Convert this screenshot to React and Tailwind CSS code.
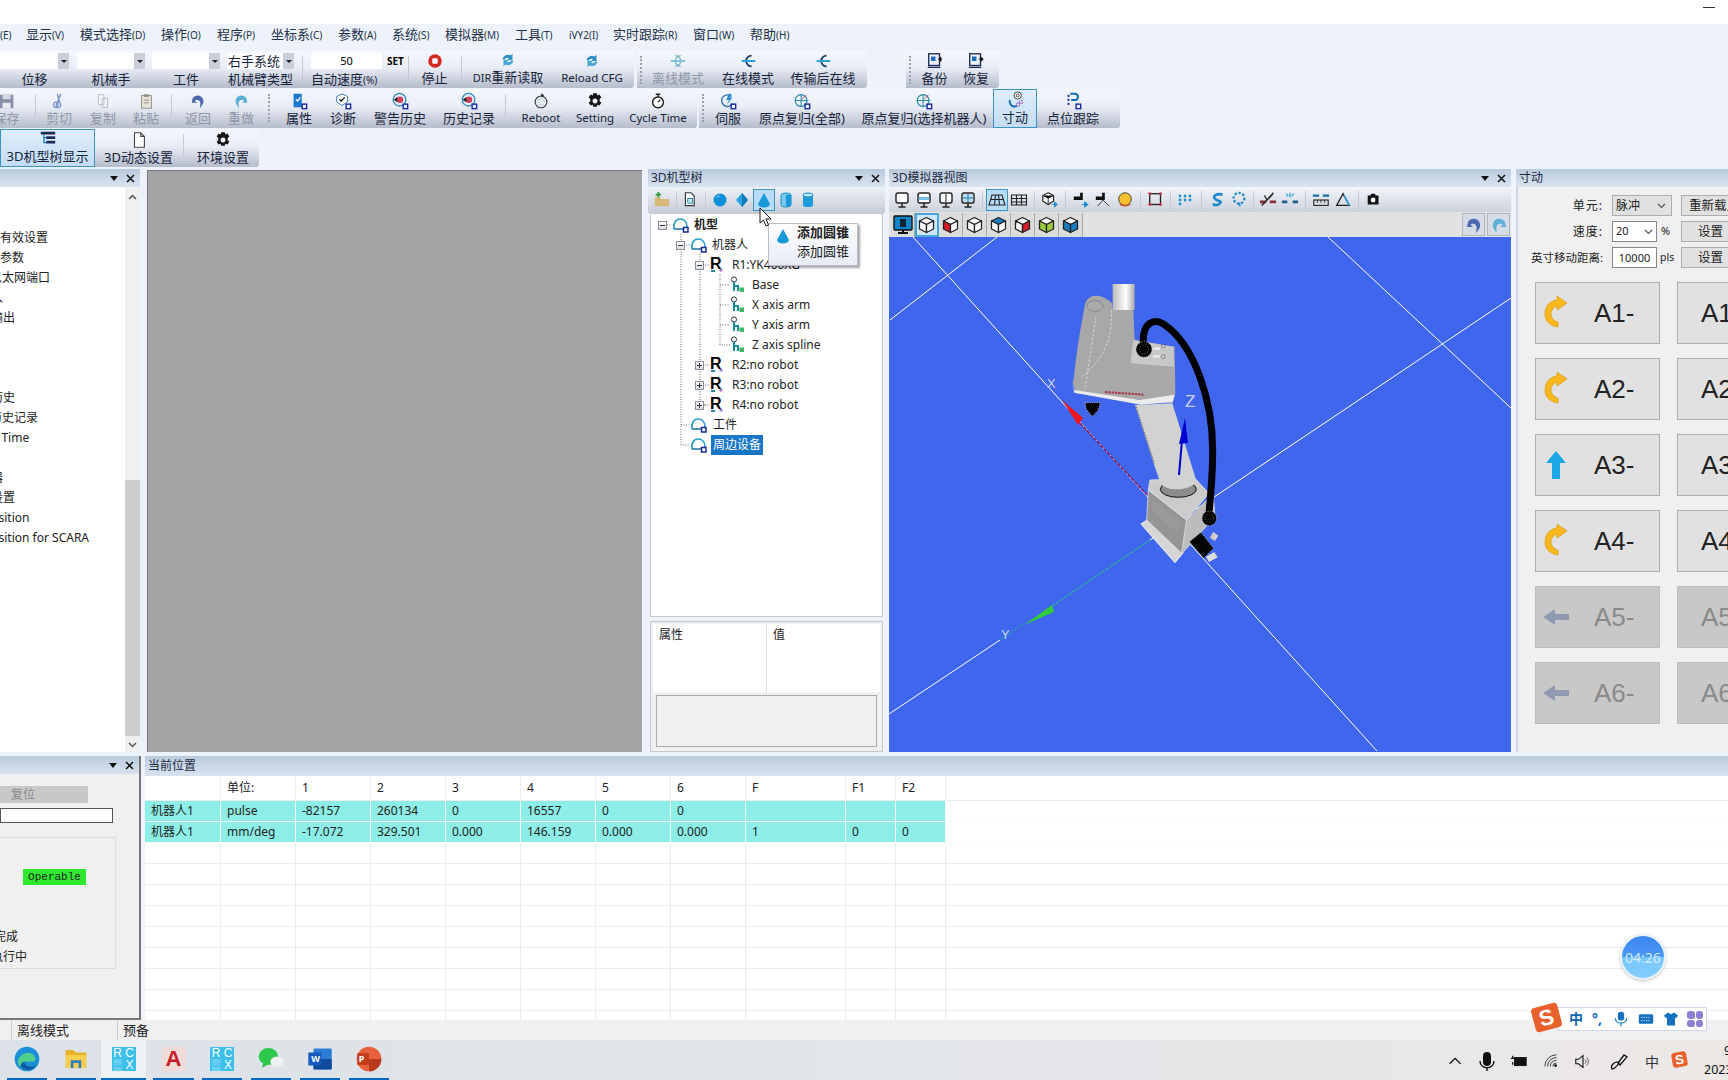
import React from "react";

const S = ({ w = 20, h = 20, v = "0 0 20 20", children, className = "" }) => (
  <svg width={w} height={h} viewBox={v} className={"shrink-0 " + className}>{children}</svg>
);

const Badge = () => <rect x="13.5" y="13.5" width="5" height="5" fill="#fff" stroke="#1a2a9c" strokeWidth="1.6" />;

const icons = {
  none: null,
  stop: <><circle cx="10" cy="10" r="7.5" fill="#d22a1e" /><rect x="7" y="7" width="6" height="6" rx="1" fill="#fff" /></>,
  sync: <><path d="M4 9c1-4 6-6 9-4l2-2v7h-6l2-2c-2-1-4 0-5 2z" fill="#2e8fc4" /><path d="M16 11c-1 4-6 6-9 4l-2 2v-7h6l-2 2c2 1 4 0 5-2z" fill="#4aa5d6" /></>,
  conn: <><path d="M14 4a6 6 0 1 0 0 12" fill="none" stroke="#1b3e66" strokeWidth="2" /><path d="M3 10h15" stroke="#2aa0dc" strokeWidth="2" /></>,
  connDim: <><path d="M13 4a6 6 0 1 0 0 12M7 4a6 6 0 1 1 0 12" fill="none" stroke="#7fb4c6" strokeWidth="1.5" /><path d="M2 10h16" stroke="#7fc0dc" strokeWidth="2" /></>,
  backup: <><rect x="3" y="2" width="12" height="13" fill="none" stroke="#1b2a55" strokeWidth="1.5" /><rect x="5.5" y="5" width="5" height="5" fill="#1c6fc0" /><path d="M2 17h14" stroke="#1b2a55" strokeWidth="1.5" /><path d="M18 8h-4M14 8l2.5-2.5v5z" stroke="#111" fill="#111" /></>,
  restore: <><rect x="3" y="2" width="12" height="13" fill="none" stroke="#1b2a55" strokeWidth="1.5" /><rect x="5.5" y="5" width="5" height="5" fill="#1c6fc0" /><path d="M2 17h14" stroke="#1b2a55" strokeWidth="1.5" /><path d="M13 8h4M18 8l-2.5-2.5v5z" stroke="#111" fill="#111" /></>,
  save: <><rect x="2" y="3" width="15" height="15" fill="#8a8fa8" /><rect x="5" y="3" width="9" height="5" fill="#d4d8e4" /><rect x="5" y="12" width="9" height="6" fill="#e8eaf2" /></>,
  cut: <path d="M12 2L8 12M8 2l3 10M8 12a2.5 3 0 1 0 .1 .1M11 12a2.5 3 0 1 0 .1 .1" fill="none" stroke="#7f98c8" strokeWidth="1.6" />,
  copy: <><path d="M5 3h6v11H5zM9 7h6v10H9z" fill="#f2f4f8" stroke="#b3b8c6" /></>,
  paste: <><rect x="5" y="4" width="11" height="14" fill="#e6e4da" stroke="#8f8c80" /><rect x="8" y="2.5" width="5" height="3" fill="#8f8c80" /><path d="M7.5 9h6M7.5 12h6" stroke="#8f8c80" /></>,
  undo: <path d="M4 7c3-5 11-4 12 2 .5 3-1 6-4 9 .8-4 1.5-8-2-9-2-.6-3 .3-3.5 1L9 12H3z" fill="#4f67ae" />,
  redo: <path d="M16 7c-3-5-11-4-12 2-.5 3 1 6 4 9-.8-4-1.5-8 2-9 2-.6 3 .3 3.5 1L11 12h6z" fill="#5fb0d4" />,
  prop: <><path d="M4 2h9v15H4z" fill="#1c78d0" /><path d="M6.5 8l2 2 3-4" fill="none" stroke="#fff" strokeWidth="1.4" /><Badge /></>,
  diag: <><path d="M9 2l6 3v6l-6 4-6-4V5z" fill="#fff" stroke="#2f6fb0" /><path d="M6 8l2 2 4-4" fill="none" stroke="#111" strokeWidth="1.4" /><Badge /></>,
  alarm: <><circle cx="9.5" cy="8.5" r="7" fill="#e9eef8" stroke="#2f8fc0" strokeWidth="1.5" /><circle cx="10" cy="8.5" r="3.6" fill="#d0405c" /><path d="M3 8.5l4-3v6z" fill="#222" /><Badge /></>,
  reboot: <><circle cx="10" cy="11" r="6.5" fill="none" stroke="#333" strokeWidth="1.2" /><circle cx="10" cy="11" r="3.5" fill="none" stroke="#5aa0c8" strokeDasharray="1 1.4" /><path d="M10 1.5l3.5 2-3 2.5z" fill="#222" /></>,
  gear: <path fillRule="evenodd" d="M8 1.5h4l.6 2.4 2.3-1 2.2 3.2-1.9 1.6 0 2.6 1.9 1.6-2.2 3.2-2.3-1-.6 2.4H8l-.6-2.4-2.3 1-2.2-3.2 1.9-1.6 0-2.6-1.9-1.6 2.2-3.2 2.3 1zM10 7.2a2.8 2.8 0 1 0 .01 0z" fill="#161616" />,
  timer: <><circle cx="10" cy="11.5" r="6" fill="#fff" stroke="#222" strokeWidth="1.6" /><path d="M7.5 2.5h5M10 2.5v3M10 11.5l2.5-3" stroke="#222" strokeWidth="1.5" /></>,
  servo: <><path d="M14 5a6.5 6.5 0 1 0 1 8" fill="none" stroke="#2f6fb0" strokeWidth="1.5" /><path d="M11 2l-3 7h3l-2 5 6-8h-3l2-4z" fill="#2a8fd0" /><Badge /></>,
  origin: <><circle cx="9" cy="9.5" r="6.5" fill="none" stroke="#2f8fa8" strokeWidth="1.4" /><path d="M2 9.5h15M9 3v13" stroke="#2f8fa8" strokeWidth="1.2" /><path d="M10 8l5-5" stroke="#d04068" /><Badge /></>,
  jog: <><path d="M4 10c0 9 9 9 10 3" fill="none" stroke="#1f6fc0" strokeWidth="2.2" /><circle cx="13" cy="5" r="4" fill="#fff" stroke="#333" /><circle cx="13" cy="5" r="1.6" fill="none" stroke="#333" /><rect x="12" y="13.5" width="3" height="3" fill="#fff" stroke="#9a6fc8" /><rect x="15" y="11" width="3" height="3" fill="#fff" stroke="#9a6fc8" /></>,
  point: <><path d="M5 3v13" stroke="#1b2a8c" strokeWidth="2" strokeDasharray="2.5 2" /><path d="M7 2h5a3.5 3.5 0 0 1 0 7H8" fill="none" stroke="#0f6fb0" strokeWidth="2.2" /><Badge /></>,
  tree: <><path d="M2 2h16v3H2z" fill="#1b2a55" /><rect x="8" y="7" width="10" height="3" fill="#1b2a55" /><rect x="8" y="12" width="10" height="3" fill="#1b2a55" /><path d="M5.5 5v9h3M5.5 8.5h3" fill="none" stroke="#1c78c0" strokeWidth="1.5" /></>,
  doc: <path d="M5 2h7l4 4v12H5zM12 2v4h4" fill="#fff" stroke="#444" strokeWidth="1.2" />,
};

const Item = ({ w, label, icon = "none", dim, active, tall, small }) => (
  <div className={`${w} h-full flex flex-col items-center justify-end shrink-0 pb-[2px] ${active ? "border border-[#3b93c6] bg-[linear-gradient(#dfeefb,#c4dcf2)]" : ""}`}>
    {icons[icon] ? <S w={tall ? 20 : 18} h={tall ? 20 : 18}>{icons[icon]}</S> : null}
    <span className={`whitespace-nowrap leading-[16px] ${small ? "text-[11.5px]" : "text-[13px]"} ${dim ? "text-[#8f97a8]" : "text-[#16233a]"}`}>{label}</span>
  </div>
);

const Sep = ({ mx = "mx-[3px]" }) => <div className={`w-px h-[24px] self-start mt-[5px] bg-[#c2c8d6] shrink-0 ${mx}`} />;
const Grip = ({ mx = "mx-[3px]" }) => <div className={`w-[2px] h-[28px] self-start mt-[5px] border-l-2 border-dotted border-[#9aa2b2] shrink-0 ${mx}`} />;

const tb = "h-full flex bg-[linear-gradient(#f4f7fd_0%,#e9edf6_45%,#b6bccb_100%)] rounded-br-[3px] overflow-hidden";

const Combo = ({ w, text, label, cw }) => (
  <div className={`${cw} h-full flex flex-col items-stretch shrink-0`}>
    <div className="h-[16px] mt-[2px] flex">
      <div className={`${w} bg-white text-[13px] leading-[16px] px-[1px] whitespace-nowrap text-[#16233a]`}>{text}</div>
      <div className="w-[11px] bg-[#c9cedb] flex items-center justify-center"><div className="border-x-[3px] border-x-transparent border-t-[3px] border-t-[#222]" /></div>
    </div>
    <div className="text-center text-[13px] leading-[16px] mt-[2px] text-[#16233a] whitespace-nowrap">{label}</div>
  </div>
);

const menu = [
  ["w-[26px]", "", "(E)"], ["w-[54px]", "显示", "(V)"], ["w-[81px]", "模式选择", "(D)"], ["w-[56px]", "操作", "(O)"],
  ["w-[54px]", "程序", "(P)"], ["w-[67px]", "坐标系", "(C)"], ["w-[54px]", "参数", "(A)"], ["w-[53px]", "系统", "(S)"],
  ["w-[70px]", "模拟器", "(M)"], ["w-[54px]", "工具", "(T)"], ["w-[44px]", "", "iVY2(I)"], ["w-[80px]", "实时跟踪", "(R)"],
  ["w-[57px]", "窗口", "(W)"], ["w-[60px]", "帮助", "(H)"],
];

const Toolbars = () => (
  <>
    <div className="h-[24px] bg-white relative shrink-0">
      <div className="absolute left-[1703px] top-[7px] w-[12px] h-px bg-[#333]" />
    </div>
    <div className="h-[26px] flex items-start pt-[2px] text-[13px] leading-[16px] text-[#22304a] shrink-0">
      {menu.map(([w, a, b], i) => (
        <div key={i} className={`${w} whitespace-nowrap shrink-0`}>{a}<span className="text-[10px]">{b}</span></div>
      ))}
    </div>

    <div className="h-[37px] flex mt-px shrink-0">
      <div className={`${tb} w-[634px]`}>
        <Combo cw="w-[69px] mr-[8px]" w="w-[58px]" label="位移" />
        <Combo cw="w-[68px] mr-[7px]" w="w-[57px]" label="机械手" />
        <Combo cw="w-[68px] mr-[7px]" w="w-[57px]" label="工件" />
        <Combo cw="w-[67px]" w="w-[56px]" text="右手系统" label="机械臂类型" />
        <Sep mx="mx-[8px]" />
        <div className="w-[94px] h-full flex flex-col shrink-0">
          <div className="h-[16px] mt-[2px] flex">
            <div className="w-[71px] bg-white text-center text-[11px] leading-[16px]">50</div>
            <div className="ml-[5px] text-[10px] font-bold leading-[16px]">SET</div>
          </div>
          <div className="text-[13px] leading-[16px] mt-[2px] text-[#16233a] whitespace-nowrap">自动速度<span className="text-[10px]">(%)</span></div>
        </div>
        <Sep />
        <Item w="w-[45px]" icon="stop" label="停止" />
        <Sep mx="mx-[4px]" />
        <Item w="w-[84px]" icon="sync" label={<><span className="text-[11px]">DIR</span>重新读取</>} />
        <Item w="w-[84px]" icon="sync" label="Reload CFG" small />
      </div>
      <div className={`${tb} w-[230px] ml-[3px]`}>
        <Grip />
        <Item w="w-[66px]" icon="connDim" label="离线模式" dim />
        <Item w="w-[74px]" icon="conn" label="在线模式" />
        <Item w="w-[76px]" icon="conn" label="传输后在线" />
      </div>
      <div className={`${tb} w-[93px] ml-[39px]`}>
        <Grip />
        <Item w="w-[41px]" icon="backup" label="备份" />
        <Item w="w-[42px]" icon="restore" label="恢复" />
      </div>
    </div>

    <div className="h-[39px] flex mt-px shrink-0">
      <div className={`${tb} w-[697px]`}>
        <div className="-ml-[21px] flex h-full">
          <Item w="w-[55px]" icon="save" label="保存" dim />
          <Sep mx="mx-[1px]" />
          <Item w="w-[44px]" icon="cut" label="剪切" dim />
          <Item w="w-[44px]" icon="copy" label="复制" dim />
          <Item w="w-[42px]" icon="paste" label="粘贴" dim />
          <Sep mx="mx-[4px]" />
          <Item w="w-[44px]" icon="undo" label="返回" dim />
          <Item w="w-[42px]" icon="redo" label="重做" dim />
          <Grip mx="mx-[6px]" />
          <Item w="w-[46px]" icon="prop" label="属性" />
          <Item w="w-[42px]" icon="diag" label="诊断" />
          <Item w="w-[72px]" icon="alarm" label="警告历史" />
          <Item w="w-[66px]" icon="alarm" label="历史记录" />
          <Sep mx="mx-[3px]" />
          <Item w="w-[64px]" icon="reboot" label="Reboot" small />
          <Item w="w-[44px]" icon="gear" label="Setting" small />
          <Item w="w-[82px]" icon="timer" label="Cycle Time" small />
        </div>
      </div>
      <div className={`${tb} w-[421px] ml-[2px]`}>
        <Grip />
        <Item w="w-[42px]" icon="servo" label="伺服" />
        <Item w="w-[106px]" icon="origin" label="原点复归(全部)" />
        <Item w="w-[138px]" icon="origin" label="原点复归(选择机器人)" />
        <Item w="w-[44px]" icon="jog" label="寸动" active />
        <Item w="w-[72px]" icon="point" label="点位跟踪" />
      </div>
    </div>

    <div className="h-[38px] flex mt-px shrink-0">
      <div className={`${tb} w-[259px]`}>
        <Item w="w-[95px]" icon="tree" label="3D机型树显示" active />
        <Item w="w-[87px]" icon="doc" label="3D动态设置" />
        <Sep mx="mx-[1px]" />
        <Item w="w-[76px]" icon="gear" label="环境设置" />
      </div>
    </div>
  </>
);

const Caption = ({ title, ctl = true, className = "" }) => (
  <div className={`h-[18px] shrink-0 flex items-center bg-[linear-gradient(#b9cbdf,#d9e3ef)] text-[12px] text-[#1d2b3e] pl-[3px] relative ${className}`}>
    <span className="whitespace-nowrap">{title}</span>
    {ctl && (
      <div className="ml-auto flex items-center gap-[8px] pr-[5px]">
        <div className="border-x-[4.5px] border-x-transparent border-t-[5px] border-t-[#111]" />
        <svg width="9" height="9" viewBox="0 0 9 9"><path d="M1 1l7 7M8 1l-7 7" stroke="#111" strokeWidth="1.5" /></svg>
      </div>
    )}
  </div>
);

const leftRows = [
  ["237", "有效设置", "ml-0"], ["257", "参数", "ml-0"], ["277", "以太网端口", "-ml-[10px]"], ["297", "输入", "-ml-[21px]"], ["317", "输出", "-ml-[9px]"],
  ["337", "", ""], ["357", "", ""], ["377", "", ""], ["397", "警告历史", "-ml-[33px]"], ["417", "警告历史记录", "-ml-[34px]"],
  ["437", "Cycle Time", "-ml-[31px]"], ["457", "", ""], ["477", "伺服器", "-ml-[33px]"], ["497", "设置", "-ml-[9px]"],
  ["517", "Position", "-ml-[16px]"], ["537", "Position for SCARA", "-ml-[16px]"],
];

const LeftPanel = () => (
  <div className="w-[140px] h-full flex flex-col shrink-0">
    <Caption title="" className="pr-[0px]" />
    <div className="flex-1 flex bg-white min-h-0">
      <div className="w-[125px] overflow-hidden pt-[41px] text-[12px] leading-[20px] text-[#222]">
        {leftRows.map(([k, t, m]) => <div key={k} className={`h-[20px] whitespace-nowrap ${m}`}>{t}</div>)}
      </div>
      <div className="w-[15px] bg-[#f0f0f0] flex flex-col items-center text-[#555]">
        <svg className="mt-[7px] shrink-0" width="9" height="6" viewBox="0 0 9 6"><path d="M1 5l3.5-3.5L8 5" fill="none" stroke="#555" strokeWidth="1.5" /></svg>
        <div className="w-full bg-[#cdcdcd] h-[256px] mt-[280px] shrink-0" />
        <svg className="mt-[6px] shrink-0" width="9" height="6" viewBox="0 0 9 6"><path d="M1 1l3.5 3.5L8 1" fill="none" stroke="#555" strokeWidth="1.5" /></svg>
      </div>
    </div>
  </div>
);

const TB = ({ children, boxed, className = "" }) => (
  <div className={`w-[22px] h-[22px] flex items-center justify-center shrink-0 ${boxed ? "border border-[#3f93c4] bg-[#b8dcf6]" : ""} ${className}`}>{children}</div>
);
const VSep = ({ mx = "mx-[4px]" }) => <div className={`w-px h-[18px] bg-[#c6ccd6] shrink-0 ${mx}`} />;

const TreeModel = () => (
  <S w={18} h={16} v="0 0 18 16"><path d="M2 12c-1-6 2-10 6-10s7 3 7 8" fill="none" stroke="#2a9cc8" strokeWidth="1.7" /><path d="M2 12h10" stroke="#1b6f9c" strokeWidth="1.5" /><rect x="11.5" y="10.5" width="4.5" height="4.5" fill="#fff" stroke="#1a2a9c" strokeWidth="1.5" /></S>
);
const TreeR = () => (
  <div className="relative w-[16px] h-[18px] shrink-0">
    <span className="absolute left-[1px] top-[-2px] text-[16px] font-bold leading-[20px] text-black font-['Liberation_Sans',sans-serif]">R</span>
    <svg className="absolute left-0 top-0" width="16" height="18" viewBox="0 0 16 18"><path d="M10 14l2-1.5 2 1.5-2 2z" fill="#a070c8" /><path d="M2 15h4" stroke="#2a8a9c" strokeWidth="2" /></svg>
  </div>
);
const TreeLink = () => (
  <S w={16} h={18} v="0 0 16 18"><circle cx="4" cy="3.5" r="2.6" fill="#fff" stroke="#2a3a4c" strokeWidth="1" /><path d="M4 6v9M4 10h4v5" fill="none" stroke="#178a9c" strokeWidth="2" /><rect x="9.5" y="11.5" width="4.5" height="4.5" fill="#3cb868" /></S>
);
const Exp = ({ plus }) => (
  <div className="w-[9px] h-[9px] border border-[#8a8f98] bg-[linear-gradient(#fff,#d8dce4)] relative shrink-0">
    <div className="absolute left-[1px] right-[1px] top-[3px] h-px bg-[#333]" />
    {plus && <div className="absolute top-[1px] bottom-[1px] left-[3px] w-px bg-[#333]" />}
  </div>
);

const TreeRow = ({ pl, exp, plus, icon, text, bold, sel, ml = "ml-[4px]" }) => (
  <div className={`h-[20px] flex items-center ${pl}`}>
    {exp ? <div className="w-[14px] shrink-0 flex"><Exp plus={plus} /></div> : null}
    <div className="bg-white flex">{icon}</div>
    <span className={`${ml} whitespace-nowrap ${bold ? "font-bold" : ""} ${sel ? "bg-[#1976c6] text-white px-[2px] leading-[20px]" : "text-[#222] bg-white"}`}>{text}</span>
  </div>
);

const TreePanel = () => (
  <div className="w-[237px] h-full flex flex-col shrink-0 relative">
    <Caption title="3D机型树" />
    <div className="h-[26px] shrink-0 flex items-center pl-[3px] bg-[linear-gradient(#eef2f8,#c6ccd8)]">
      <TB><S w={18} h={18}><path d="M2 7h6l1 2h9v8H2z" fill="#d8b878" /><path d="M6 1v6M3 4h6" stroke="#2f9a3a" strokeWidth="2" /></S></TB>
      <VSep mx="mx-[3px]" />
      <TB><S w={16} h={18}><path d="M3 1h7l4 4v12H3z" fill="#fff" stroke="#333" strokeWidth="1.4" /><rect x="6" y="8" width="6" height="6" fill="#bfe6f2" stroke="#1a7a9c" /></S></TB>
      <VSep mx="mx-[3px]" />
      <TB><S w={14} h={14} v="0 0 14 14"><circle cx="7" cy="7" r="6.5" fill="#108fd8" /><path d="M3 5a4 3 0 0 1 4-2" stroke="#9ad8f8" fill="none" /></S></TB>
      <TB><S w={14} h={16} v="0 0 14 16"><path d="M7 1l6 7-6 7-6-7z" fill="#26a4e0" /><path d="M7 1l6 7-6 7z" fill="#0f7cb8" /></S></TB>
      <TB boxed><S w={14} h={16} v="0 0 14 16"><path d="M7 1l6 11a6 3.5 0 0 1-12 0z" fill="#189ad8" /></S></TB>
      <TB><S w={12} h={16} v="0 0 12 16"><path d="M1 3a5 2 0 0 1 10 0v10a5 2 0 0 1-10 0z" fill="#7ac8ee" stroke="#1a8ec8" /><path d="M6 3v11h5V3z" fill="#189ad8" /></S></TB>
      <TB><S w={12} h={16} v="0 0 12 16"><path d="M1 3a5 2 0 0 1 10 0v10a5 2 0 0 1-10 0z" fill="#1a9ad8" /><ellipse cx="6" cy="3" rx="5" ry="2" fill="#bfe8fa" stroke="#1a8ec8" /></S></TB>
    </div>
    <div className="h-[404px] shrink-0 bg-white border border-[#c8c8c8] ml-[2px] mr-[2px] pt-[1px] text-[12px] relative overflow-hidden">
      <svg className="absolute left-0 top-0" width="233" height="402" strokeDasharray="1 1.5" stroke="#666" fill="none">
        <path d="M16 11H22M30 20V231H38M30 211H38M35 31H41M49 40V191H55M54 151H60M54 171H60M54 191H60M54 51H60M69 60V131H79M69 71H79M69 91H79M69 111H79" />
      </svg>
      <div className="relative">
        <TreeRow pl="pl-[7px]" exp icon={<TreeModel />} text="机型" bold />
        <TreeRow pl="pl-[25px]" exp icon={<TreeModel />} text="机器人" />
        <TreeRow pl="pl-[44px]" exp icon={<TreeR />} text="R1:YK400XG" ml="ml-[7px]" />
        {["Base", "X axis arm", "Y axis arm", "Z axis spline"].map((t) => (
          <TreeRow key={t} pl="pl-[79px]" icon={<TreeLink />} text={t} ml="ml-[6px]" />
        ))}
        {["R2:no robot", "R3:no robot", "R4:no robot"].map((t) => (
          <TreeRow key={t} pl="pl-[44px]" exp plus icon={<TreeR />} text={t} ml="ml-[7px]" />
        ))}
        <TreeRow pl="pl-[39px]" icon={<TreeModel />} text="工件" ml="ml-[5px]" />
        <TreeRow pl="pl-[39px]" icon={<TreeModel />} text="周边设备" sel ml="ml-[3px]" />
      </div>
    </div>
    <div className="flex-1 mt-[4px] mx-[2px] border border-[#c8c8c8] bg-[#f0f0f0] flex flex-col p-[2px] min-h-0">
      <div className="h-[68px] bg-white flex text-[12px] text-[#222] shrink-0">
        <div className="w-[114px] border-r border-[#ddd] pl-[6px] pt-[2px]">属性</div>
        <div className="pl-[6px] pt-[2px]">值</div>
      </div>
      <div className="flex-1 mt-[3px] mx-[3px] mb-[2px] border border-[#aaa] bg-[#f0f0f0]" />
    </div>
  </div>
);

const Mon = ({ fill }) => (
  <S w={16} h={18} v="0 0 16 18"><rect x="2" y="2" width="12" height="10" rx="2" fill="#fff" stroke="#222" strokeWidth="1.4" />{fill}<path d="M8 12v4M4.5 16h7" stroke="#222" strokeWidth="1.5" /></S>
);
const Cube = ({ a = "#fff", b = "#fff", c = "#fff", sel }) => (
  <div className={`w-[24px] h-[24px] flex items-center justify-center shrink-0 border-r border-[#a8a8a8] ${sel ? "bg-[#cfe6f6] outline outline-2 -outline-offset-2 outline-[#49a6d8]" : "bg-[#dcdcdc]"}`}>
    <S w={17} h={18} v="0 0 17 18">
      <path d="M8.5 1.5l7 3.5-7 3.5-7-3.5z" fill={a} stroke="#222" strokeWidth="1.3" strokeLinejoin="round" />
      <path d="M1.5 5l7 3.5v8l-7-3.5z" fill={b} stroke="#222" strokeWidth="1.3" strokeLinejoin="round" />
      <path d="M15.5 5l-7 3.5v8l7-3.5z" fill={c} stroke="#222" strokeWidth="1.3" strokeLinejoin="round" />
    </S>
  </div>
);

const Speck = ({ cx, cy, r }) => (
  <g>
    <circle cx={cx} cy={cy} r={r} fill="#050505" />
    <circle cx={cx} cy={cy} r={r} fill="none" stroke="#e8e8e8" strokeDasharray="3 4" strokeWidth="2" />
    <circle cx={cx} cy={cy} r={r * 0.55} fill="none" stroke="#bbb" strokeDasharray="2 6" strokeWidth="2" />
  </g>
);

const Robot = () => (
  <g transform="translate(1000 260) scale(0.3333)">
    <path d="M423 792l22-14 105 100-25 30z" fill="#d6d6d6" stroke="#f2f2f2" strokeWidth="3" />
    <path d="M445 690l115 90-15 100-105-100z" fill="#959595" stroke="#eee" strokeWidth="2" />
    <path d="M460 720l80 62-6 40-78-72z" fill="#9a9a9a" />
    <path d="M560 780l80-80 5 70-100 112z" fill="#bcbcbc" stroke="#ddd" strokeWidth="2" />
    <path d="M450 660l135-5 42 45-67 80-115-90z" fill="#cbcbcb" stroke="#eee" strokeWidth="2" />
    <ellipse cx="535" cy="688" rx="54" ry="24" fill="#8d8d8d" stroke="#111" strokeWidth="3" />
    <path d="M405 435l112-5 72 232c-10 30-92 36-108 6l-18-52z" fill="#d2d2d2" />
    <path d="M408 440l55 170" stroke="#666" strokeWidth="3" strokeDasharray="5 3" />
    <path d="M222 350c8-80 22-160 34-220 10-30 50-30 80 0l2 20h62l4 90 120 20 2 140-8 30-290-30-10-30z" fill="#a8a8a8" />
    <path d="M400 240l120 20 2 60-130-10z" fill="#c8c8c8" />
    <path d="M338 72h66v78h-66z" fill="url(#cap)" />
    <ellipse cx="285" cy="138" rx="24" ry="16" fill="#aaa" stroke="#777" strokeWidth="2" />
    <path d="M215 370l8 28 200 36 95-8 6-22-104 16-198-30z" fill="#ececec" />
    <path d="M288 170c-10 60-20 140-34 220M335 150c0 60-2 130-90 200" fill="none" stroke="#efefef" strokeWidth="2" strokeDasharray="8 5" />
    <path d="M315 396l115 8" stroke="#a83040" strokeWidth="6" strokeDasharray="7 3" />
    <rect x="460" y="262" width="20" height="8" fill="#e8e8e8" /><rect x="460" y="285" width="20" height="8" fill="#e8e8e8" />
    <circle cx="490" cy="258" r="6" fill="none" stroke="#222" /><circle cx="490" cy="290" r="6" fill="none" stroke="#222" />
    <path d="M430 245c-2-55 30-72 62-52 90 60 148 230 146 385 0 70-6 130-12 192" fill="none" stroke="#000" strokeWidth="21" strokeLinecap="round" />
    <Speck cx={432} cy={268} r={24} />
    <Speck cx={628} cy={775} r={22} />
    <path d="M640 815l15 12-10 16-15-10z" fill="#ccc" />
    <path d="M618 890l25-14 10 16-26 14z" fill="#ddd" />
    <path d="M568 845l35-28 38 48-30 30z" fill="#050505" stroke="#e8e8e8" strokeDasharray="3 4" strokeWidth="2" />
    <path d="M255 428h46l-6 22-18 20-18-22z" fill="#050505" stroke="#e8e8e8" strokeDasharray="3 4" strokeWidth="2" />
  </g>
);

const SimPanel = () => (
  <div className="w-[622px] h-full flex flex-col shrink-0">
    <Caption title="3D模拟器视图" />
    <div className="h-[25px] shrink-0 flex items-center pl-[2px] bg-[linear-gradient(#f2f5fa,#ccd2dc)]">
      <TB><Mon /></TB>
      <TB><Mon fill={<rect x="3" y="6" width="10" height="3" fill="#7cc0e8" />} /></TB>
      <TB><Mon fill={<path d="M8 3v8" stroke="#222" />} /></TB>
      <TB><Mon fill={<><rect x="3" y="3" width="10" height="8" fill="#bfe0f2" /><path d="M8 3v8M3 7h10" stroke="#1c7cc0" /></>} /></TB>
      <VSep mx="mx-[3px]" />
      <TB boxed><S w={18} h={14} v="0 0 18 14"><path d="M4 2h10l3 10H1zM7.5 2l-1 10M10.5 2l1 10M3 6.5h12" fill="none" stroke="#222" strokeWidth="1.1" /></S></TB>
      <TB><S w={18} h={14} v="0 0 18 14"><path d="M1.5 2h15v10h-15zM1.5 5.5h15M1.5 9h15M6.5 2v10M11.5 2v10" fill="none" stroke="#222" strokeWidth="1.1" /></S></TB>
      <VSep mx="mx-[4px]" />
      <TB><S w={20} h={18}><path d="M8 2l6 3v6l-6 4-6-4V5z" fill="#fff" stroke="#222" strokeWidth="1.3" /><path d="M2 5l6 3 6-3M8 8v7" stroke="#222" /><path d="M12 15h5M15 12l3 3-3 3z" stroke="#1c8ad0" fill="#1c8ad0" /></S></TB>
      <VSep mx="mx-[4px]" />
      <TB><S w={20} h={18}><path d="M2 6h7V2h3v8H2z" fill="#111" /><path d="M11 15h5M14 12l4 3-4 3z" stroke="#1c8ad0" fill="#1c8ad0" /></S></TB>
      <TB><S w={20} h={18}><path d="M2 6h7V2h3v8H2z" fill="#111" /><path d="M10 10l-6 7M10 10l7 7" stroke="#333" fill="none" /></S></TB>
      <TB><S w={20} h={18}><circle cx="10" cy="9" r="7" fill="#fbc02d" stroke="#333" /><path d="M4 15a8 4 0 0 0 12 0" stroke="#d2502a" strokeWidth="1.5" fill="none" /></S></TB>
      <VSep mx="mx-[4px]" />
      <TB><S w={18} h={18}><rect x="3" y="3" width="12" height="12" fill="none" stroke="#222" strokeWidth="1.5" /><g fill="#c8324a"><circle cx="3" cy="3" r="1.6" /><circle cx="15" cy="3" r="1.6" /><circle cx="3" cy="15" r="1.6" /><circle cx="15" cy="15" r="1.6" /></g></S></TB>
      <VSep mx="mx-[3px]" />
      <TB><S w={16} h={14} v="0 0 16 14"><g fill="#2090d0"><circle cx="3" cy="3" r="1.4" /><circle cx="8" cy="3" r="1.4" /><circle cx="13" cy="3" r="1.4" /><circle cx="3" cy="7" r="1.4" /><circle cx="8" cy="7" r="1.4" /><circle cx="13" cy="7" r="1.4" /><circle cx="3" cy="11" r="1.4" /></g></S></TB>
      <VSep mx="mx-[5px]" />
      <TB><S w={18} h={18}><path d="M15 4C9 2 3 6 7 9s8 2 5 5-7 1-8 1" fill="none" stroke="#1e8ac8" strokeWidth="3" /></S></TB>
      <TB className="-ml-[1px]"><S w={18} h={18}><circle cx="10" cy="8" r="6" fill="none" stroke="#1e8ac8" strokeWidth="2.5" strokeDasharray="2.5 2" /><path d="M10 13l1 4" stroke="#1e8ac8" strokeWidth="2" /></S></TB>
      <VSep mx="mx-[3px]" />
      <TB><S w={20} h={18}><path d="M1 12h7M12 12h7" stroke="#8a2a3a" strokeWidth="3" /><path d="M3 16L15 4M6 5l3 5 7-8" fill="none" stroke="#222" strokeWidth="1.5" /></S></TB>
      <TB><S w={20} h={18}><path d="M1 12h6M13 12h6" stroke="#1b5f8a" strokeWidth="3" /><path d="M10 2v5M6 3l2 3M14 3l-2 3" stroke="#3aa0d8" strokeWidth="1.4" /></S></TB>
      <VSep mx="mx-[4px]" />
      <TB><S w={20} h={18}><path d="M1 5h7M12 5h7" stroke="#1c6fa8" strokeWidth="2.5" /><rect x="2" y="10" width="16" height="6" fill="none" stroke="#222" strokeWidth="1.2" /><path d="M6 10v3M10 10v3M14 10v3" stroke="#222" /></S></TB>
      <TB><S w={20} h={18}><path d="M3 16L10 3l7 13z" fill="none" stroke="#222" strokeWidth="1.4" /><path d="M11 5l6 11" stroke="#3aa0d8" strokeWidth="2" /></S></TB>
      <VSep mx="mx-[4px]" />
      <TB><S w={18} h={18}><path d="M3 5h3l1-2h4l1 2h3v10H3z" fill="#111" /><circle cx="9" cy="10" r="3.2" fill="#fff" stroke="#111" /></S></TB>
    </div>
    <div className="h-[25px] shrink-0 flex items-center bg-[#e2e2e2] pl-[2px] relative">
      <div className="w-[24px] h-[24px] flex items-center justify-center bg-[#dcdcdc] border-r border-[#a8a8a8] shrink-0">
        <S w={20} h={20}><rect x="1" y="1" width="18" height="14" rx="1" fill="#0f86c8" stroke="#111" strokeWidth="1.4" /><rect x="7" y="4" width="6" height="8" fill="#123" /><path d="M10 15v3M5 18h10" stroke="#111" strokeWidth="2" /></S>
      </div>
      <Cube sel />
      <Cube a="#fff" b="#d21e28" c="#fff" />
      <Cube a="#fff" b="#fff" c="#fff" />
      <Cube a="#1c7cc0" />
      <Cube c="#d21e28" a="#fff" />
      <Cube a="#fff" b="#9cc840" c="#9cc840" />
      <Cube a="#fff" b="#1c7cc0" c="#1c7cc0" />
      <div className="ml-auto flex pr-[1px] gap-[2px]">
        <div className="w-[23px] h-[23px] bg-[#d6dce6] border border-[#b0b6c0] flex items-center justify-center"><S w={20} h={20}>{icons.undo}</S></div>
        <div className="w-[23px] h-[23px] bg-[#d6dce6] border border-[#b0b6c0] flex items-center justify-center"><S w={20} h={20}>{icons.redo}</S></div>
      </div>
    </div>
    <div className="flex-1 min-h-0 bg-[#4166ee] overflow-hidden">
      <svg width="622" height="514" viewBox="889 237 622 514" className="block">
        <defs>
          <linearGradient id="cap" x1="0" x2="1" y1="0" y2="0"><stop offset="0" stopColor="#bbb" /><stop offset=".6" stopColor="#fff" /><stop offset="1" stopColor="#aaa" /></linearGradient>
        </defs>
        <g stroke="#fff" strokeWidth="1" fill="none">
          <path d="M913 237L1377 751" />
          <path d="M1328 237L1511 408" />
          <path d="M890 320L997 237" />
          <path d="M1511 298L1150 540M1000 640L889 714" />
        </g>
        <path d="M1150 540L1052 606" stroke="#28b0a0" strokeWidth="1.2" strokeDasharray="4 1" />
        <path d="M1023 624L1000 640" stroke="#1fa0a0" />
        <path d="M1024 625l28-20 2 7z" fill="#2ecc40" />
        <path d="M1080 423l67 72" stroke="#8a1050" strokeWidth="1.4" strokeDasharray="4 1" />
        <Robot />
        <path d="M1062 400l21 18-5 7z" fill="#f0141e" />
        <path d="M1179 475l3-35" stroke="#0000d0" strokeWidth="2" />
        <path d="M1185 418l3 25-9 1z" fill="#0000d0" />
        <g fill="#c9d4f2" fontFamily="'Liberation Sans',sans-serif">
          <text x="1047" y="388" fontSize="13">X</text>
          <text x="1001" y="639" fontSize="13">Y</text>
          <text x="1185" y="407" fontSize="17">Z</text>
        </g>
      </svg>
    </div>
  </div>
);

const ArrowCurve = () => (
  <S w={26} h={36} v="0 0 26 36">
    <path d="M24 8L14 1v4C6 6 2 12 2 19c0 7 5 12 13 13v-5c-4-1-7-4-7-8 0-4 3-7 6-8v4z" fill="#fbb81c" stroke="#d89a10" strokeWidth=".7" />
  </S>
);
const ArrowUp = () => (
  <S w={24} h={32} v="0 0 24 32"><path d="M12 2l10 12h-6v16H8V14H2z" fill="#1ba6e4" /></S>
);
const ArrowLeft = () => (
  <S w={28} h={24} v="0 0 28 24"><path d="M1 12l12-8v5h14v6H13v5z" fill="#8f9ab0" /></S>
);

const jogRows = [
  ["A1-", "A1+", <ArrowCurve />], ["A2-", "A2+", <ArrowCurve />], ["A3-", "A3+", <ArrowUp />],
  ["A4-", "A4+", <ArrowCurve />], ["A5-", "A5+", <ArrowLeft />, true], ["A6-", "A6+", <ArrowLeft />, true],
];

const Chevron = () => <svg className="shrink-0" width="9" height="6" viewBox="0 0 9 6"><path d="M1 1l3.5 3.5L8 1" fill="none" stroke="#555" strokeWidth="1.2" /></svg>;

const JogBtn = ({ text, icon, dim, ml }) => (
  <div className={`h-[62px] border flex items-center overflow-hidden ${dim ? "bg-[#c8c8c8] border-[#bcbcbc] text-[#8a8a8a]" : "bg-[#e1e1e1] border-[#adadad] text-[#222]"}`}>
    {icon ? <div className="w-[40px] flex justify-center shrink-0">{icon}</div> : null}
    <span className={`font-['Liberation_Sans',sans-serif] text-[26px] whitespace-nowrap ${ml}`}>{text}</span>
  </div>
);

const JogPanel = () => (
  <div className="w-[212px] h-full flex flex-col shrink-0 overflow-hidden">
    <Caption title="寸动" ctl={false} />
    <div className="flex-1 bg-[#f0f0f0] border-l-2 border-[#cdd6e2] text-[12px] text-[#222] overflow-hidden">
      <div className="flex mt-[8px] h-[21px] items-center">
        <div className="w-[85px] shrink-0 text-right tracking-[1px] whitespace-nowrap">单元:</div>
        <div className="ml-[9px] w-[60px] shrink-0 h-full bg-[#e1e1e1] border border-[#adadad] flex items-center justify-between pl-[3px] pr-[5px]">脉冲<Chevron /></div>
        <div className="ml-[9px] w-[60px] h-full bg-[#e1e1e1] border border-[#adadad] whitespace-nowrap shrink-0 overflow-hidden pl-[7px] text-[12.5px] leading-[19px]">重新载入</div>
      </div>
      <div className="flex mt-[5px] h-[21px] items-center">
        <div className="w-[85px] shrink-0 text-right tracking-[1px] whitespace-nowrap">速度:</div>
        <div className="ml-[9px] w-[45px] shrink-0 h-full bg-white border border-[#888] flex items-center justify-between px-[3px] text-[11px]">20<Chevron /></div>
        <div className="w-[15px] shrink-0 ml-[4px] text-[11px]">%</div>
        <div className="ml-[5px] w-[60px] h-full bg-[#e1e1e1] border border-[#adadad] shrink-0 pl-[16px] text-[12.5px] leading-[19px] whitespace-nowrap">设置</div>
      </div>
      <div className="flex mt-[5px] h-[21px] items-center">
        <div className="w-[85px] shrink-0 text-right whitespace-nowrap text-[11.5px]">英寸移动距离:</div>
        <div className="ml-[9px] w-[45px] shrink-0 h-full bg-white border border-[#888] text-[11px] text-center leading-[19px]">10000</div>
        <div className="w-[20px] shrink-0 ml-[3px] text-[10.5px]">pls</div>
        <div className="ml-[1px] w-[60px] h-full bg-[#e1e1e1] border border-[#adadad] shrink-0 pl-[16px] text-[12.5px] leading-[19px] whitespace-nowrap">设置</div>
      </div>
      <div className="mt-[14px] ml-[17px] grid grid-cols-[125px_125px] gap-x-[17px] gap-y-[14px]">
        {jogRows.map(([a, b, ic, dim]) => (
          <React.Fragment key={a}>
            <JogBtn text={a} icon={ic} dim={dim} ml="ml-[18px]" />
            <JogBtn text={b} dim={dim} ml="ml-[23px]" />
          </React.Fragment>
        ))}
      </div>
    </div>
  </div>
);

const cols = ["w-[76px]", "w-[75px]", "w-[75px]", "w-[75px]", "w-[75px]", "w-[75px]", "w-[75px]", "w-[75px]", "w-[100px]", "w-[50px]", "w-[50px]"];
const header = ["", "单位:", "1", "2", "3", "4", "5", "6", "F", "F1", "F2"];
const r1 = ["机器人1", "pulse", "-82157", "260134", "0", "16557", "0", "0", "", "", ""];
const r2 = ["机器人1", "mm/deg", "-17.072", "329.501", "0.000", "146.159", "0.000", "0.000", "1", "0", "0"];

const Row = ({ cells, h, teal }) => (
  <div className={`${h} flex border-b shrink-0 ${teal ? "border-[#f4ffff]" : "border-[#ececec]"}`}>
    {cols.map((c, i) => (
      <div key={i} className={`${c} shrink-0 border-r pl-[6px] whitespace-nowrap flex items-center ${teal ? "bg-[#8deee7] border-[#f4ffff]" : "border-[#ececec]"}`}>{cells ? cells[i] : ""}</div>
    ))}
  </div>
);

const BottomLeft = () => (
  <div className="w-[141px] h-full flex flex-col shrink-0 border-r-2 border-b-2 border-[#777]">
    <Caption title="" />
    <div className="flex-1 bg-[#f0f0f0] text-[12px] text-[#222] flex flex-col overflow-hidden">
      <div className="mt-[12px] w-[88px] h-[17px] bg-[#c8c8c8] text-[#8a8a8a] text-[12px] leading-[17px] pl-[11px] shrink-0">复位</div>
      <div className="mt-[5px] w-[113px] h-[15px] bg-white border border-[#555] shrink-0" />
      <div className="mt-[14px] w-[116px] h-[132px] border border-[#ddd] border-l-0 flex flex-col shrink-0">
        <div className="mt-[31px] ml-[23px] w-[63px] h-[16px] bg-[#2ee82e] text-center font-['Liberation_Mono',monospace] text-[11px] leading-[16px]">Operable</div>
        <div className="mt-[42px] whitespace-nowrap leading-[20px] -ml-[6px]">完成</div>
        <div className="whitespace-nowrap leading-[20px] -ml-[9px]">执行中</div>
      </div>
    </div>
  </div>
);

const Table = () => (
  <div className="flex-1 h-full ml-[4px] min-w-0 flex flex-col overflow-hidden">
    <Caption title="当前位置" ctl={false} className="h-[20px]" />
    <div className="flex-1 bg-white text-[12px] text-[#222] flex flex-col overflow-hidden">
      <Row cells={header} h="h-[25px]" />
      <Row cells={r1} h="h-[21px]" teal />
      <Row cells={r2} h="h-[21px]" teal />
      {[0, 1, 2, 3, 4, 5, 6, 7, 8].map((i) => <Row key={i} h="h-[21px]" />)}
    </div>
  </div>
);

const Rcx = () => (
  <div className="w-[24px] h-[24px] bg-[#3cc0ea] grid grid-cols-2 text-white text-[12px] leading-[12px] font-['Liberation_Sans',sans-serif] text-center shrink-0">
    <span>R</span><span>C</span><span className="text-[#bfeaf8]">▒</span><span>X</span>
  </div>
);

const TaskIcon = ({ children, w, active, mr }) => (
  <div className={`${w} ${mr} h-full flex flex-col items-center justify-between shrink-0 ${active ? "bg-[#edf1f5]" : ""}`}>
    <div className="flex-1 flex items-center justify-center">{children}</div>
    <div className="w-full h-[2px] bg-[#0067c0]" />
  </div>
);

const Taskbar = () => (
  <div className="h-[40px] shrink-0 bg-[linear-gradient(90deg,#dde2e8,#e2e5ea_50%,#ece8e6)] flex items-stretch relative text-[#111]">
    <div className="flex pl-[7px] h-full">
      <TaskIcon w="w-[40px]" mr="mr-[9px]"><S w={26} h={26}><circle cx="10" cy="10" r="9.5" fill="#1b8ed8" /><path d="M3 12c1-6 8-9 12-5 2 2 2 4 0 5H8c0 3 4 5 9 3-3 4-8 5-11 2-2-1-3-3-3-5z" fill="#4fd08a" /><path d="M5 16c4 4 9 3 12-1-5 2-9 0-9-3-2 1-3 2-3 4z" fill="#0c5aa8" /></S></TaskIcon>
      <TaskIcon w="w-[40px]" mr="mr-[5px]"><S w={26} h={26}><path d="M2 3h6l2 2h8v3H2z" fill="#e8b32a" /><rect x="2" y="7" width="16" height="10" fill="#f8cf4e" /><rect x="6" y="11" width="8" height="6" fill="#2a7cc0" /><rect x="8" y="13" width="4" height="4" fill="#f8cf4e" /></S></TaskIcon>
      <TaskIcon w="w-[45px]" mr="mr-[7px]" active><Rcx /></TaskIcon>
      <TaskIcon w="w-[41px]" mr="mr-[8px]"><div className="w-[24px] h-[24px] bg-[#f0dcd8] flex items-center justify-center text-[#c8202a] font-bold text-[22px] leading-none font-['Liberation_Sans',sans-serif]">A</div></TaskIcon>
      <TaskIcon w="w-[40px]" mr="mr-[9px]"><Rcx /></TaskIcon>
      <TaskIcon w="w-[40px]" mr="mr-[9px]"><S w={26} h={26}><ellipse cx="8" cy="8" rx="7.5" ry="6.5" fill="#2ec84a" /><path d="M4 13l-1 4 5-3z" fill="#2ec84a" /><ellipse cx="14.5" cy="12" rx="5" ry="4" fill="#f0f0f0" /></S></TaskIcon>
      <TaskIcon w="w-[40px]" mr="mr-[9px]"><S w={26} h={26}><rect x="5" y="2" width="14" height="16" rx="1" fill="#2b7cd3" /><rect x="5" y="10" width="14" height="8" fill="#124a9c" /><rect x="1" y="5" width="10" height="10" fill="#185abd" /></S><span className="absolute text-white text-[9px] font-bold -ml-[9px]">W</span></TaskIcon>
      <TaskIcon w="w-[40px]"><S w={26} h={26}><circle cx="10" cy="10" r="9.5" fill="#e8603c" /><path d="M10 10h9.5A9.5 9.5 0 0 1 10 19.5z" fill="#b83a1c" /><rect x="1" y="5.5" width="9" height="9" fill="#c43e1c" /></S><span className="absolute text-white text-[9px] font-bold -ml-[15px]">P</span></TaskIcon>
    </div>
    <div className="absolute left-[1447px] top-[11px] flex items-center">
      <S w={18} h={18}><path d="M3 12l6-6 6 6" fill="none" stroke="#111" strokeWidth="1.4" /></S>
      <S w={20} h={22} v="0 0 20 22" className="ml-[12px]"><rect x="6" y="1" width="8" height="14" rx="4" fill="#111" /><path d="M3 10c0 9 14 9 14 0M10 16v4" fill="none" stroke="#111" strokeWidth="1.4" /></S>
      <S w={20} h={18} className="ml-[12px]"><rect x="5" y="5" width="13" height="9" fill="#111" stroke="#111" /><path d="M1 6h4M3 3v3M3 13v-3" stroke="#111" strokeWidth="1.4" /></S>
      <S w={18} h={18} className="ml-[14px]"><path d="M2 15a13 13 0 0 1 13-13M5 15a10 10 0 0 1 10-10M8 15a7 7 0 0 1 7-7M11 15a4 4 0 0 1 4-4" fill="none" stroke="#333" strokeWidth="1" /><circle cx="14" cy="14" r="1.6" fill="#111" /></S>
      <S w={18} h={18} className="ml-[13px]"><path d="M2 7h3l5-4v13l-5-4H2z" fill="none" stroke="#111" strokeWidth="1.2" /><path d="M12 7a3 3 0 0 1 0 5M14 5a6 6 0 0 1 0 9" fill="none" stroke="#555" /></S>
      <S w={20} h={20} className="ml-[17px]"><path d="M3 17c-2-3 3-9 7-6-2 3-4 6-7 6zM9 11l6-8 3 2-7 8z" fill="none" stroke="#111" strokeWidth="1.3" /></S>
    </div>
    <span className="absolute left-[1645px] top-[11px] text-[14px] text-[#333]">中</span>
    <div className="absolute left-[1672px] top-[12px] w-[15px] h-[15px] bg-[#e8602c] rounded-[3px] rotate-[-10deg] text-white text-[13px] leading-[15px] font-bold text-center font-['Liberation_Sans',sans-serif]">S</div>
    <div className="absolute left-[1704px] top-[1px] w-[60px] text-[12.5px] leading-[19px] text-[#111]">
      <div className="pl-[20px]">9</div>
      <div>2023</div>
    </div>
  </div>
);

const Overlays = () => (
  <>
    <div className="absolute left-[768px] top-[223px] w-[90px] h-[43px] bg-[linear-gradient(#fff,#e6ebf5)] border border-[#b8bdc8] shadow-[2px_2px_2px_rgba(0,0,0,0.35)] text-[13px] text-[#222]">
      <S w={14} h={16} v="0 0 14 16" className="absolute left-[7px] top-[4px]"><path d="M7 1l6 11a6 3.5 0 0 1-12 0z" fill="#189ad8" /></S>
      <div className="absolute left-[28px] top-[-1px] font-bold whitespace-nowrap leading-[18px]">添加圆锥</div>
      <div className="absolute left-[28px] top-[18px] whitespace-nowrap leading-[18px]">添加圆锥</div>
    </div>
    <svg className="absolute left-[759px] top-[207px]" width="14" height="20" viewBox="0 0 14 20"><path d="M1 1v15l3.5-3 2.5 6 2.5-1-2.5-6h5z" fill="#fff" stroke="#111" strokeWidth="1" /></svg>

    <div className="absolute left-[1620px] top-[934px] w-[46px] h-[46px] rounded-full bg-[linear-gradient(#3b84f2_0%,#4a98f5_48%,#79c8ff_52%,#82ccff_100%)] border-[2px] border-[#e8f2f8] shadow-[0_1px_3px_rgba(0,0,0,0.25)] flex items-center justify-center text-[14px] text-[#d6e8ff]">04:26</div>

    <div className="absolute left-[1557px] top-[1007px] w-[150px] h-[24px] bg-white border border-[#cdd8e8] flex items-center pl-[11px] text-[#0f66b8]">
      <span className="text-[14px] font-bold leading-none">中</span>
      <span className="ml-[9px] text-[14px] font-bold leading-none w-[14px]">°,</span>
      <S w={16} h={18} className="ml-[7px]"><rect x="6" y="1" width="8" height="11" rx="4" fill="#1570c0" /><path d="M3 9c0 8 14 8 14 0M10 15v4" fill="none" stroke="#1570c0" strokeWidth="1.5" /></S>
      <S w={16} h={16} className="ml-[9px]"><rect x="1" y="4" width="18" height="12" rx="2" fill="#1570c0" /><path d="M4 8h12M4 12h12" stroke="#fff" strokeDasharray="1.5 1.5" /></S>
      <S w={16} h={16} className="ml-[9px]"><path d="M6 2l4 2 4-2 5 4-3 3-1-1v10H5V8L4 9 1 6z" fill="#1570c0" /></S>
      <div className="ml-[8px] w-[16px] h-[16px] grid grid-cols-2 gap-[1px]">
        <div className="bg-[#8a7fd0] rounded-[3px]" /><div className="bg-[#8a7fd0] rounded-[3px]" /><div className="bg-[#8a7fd0] rounded-[3px]" /><div className="bg-[#8a7fd0] rounded-[3px]" />
      </div>
    </div>
    <div className="absolute left-[1533px] top-[1005px] w-[27px] h-[25px] rounded-[4px] bg-[#e8602c] rotate-[-15deg] flex items-center justify-center text-white text-[22px] font-bold leading-none font-['Liberation_Sans',sans-serif]">S</div>
  </>
);

export default function App() {
  return (
    <div className="relative w-[1728px] h-[1080px] overflow-hidden bg-[#eef3fb] flex flex-col font-['Noto_Sans','Noto_Sans_CJK_SC',sans-serif]">
      <Toolbars />
      <div className="h-[583px] mt-[2px] flex shrink-0">
        <LeftPanel />
        <div className="w-[495px] ml-[7px] mt-[1px] h-[582px] bg-[#a4a4a4] border-l border-t border-[#777] shrink-0" />
        <div className="w-[6px] shrink-0" />
        <TreePanel />
        <div className="w-[4px] shrink-0" />
        <SimPanel />
        <div className="w-[5px] shrink-0" />
        <JogPanel />
      </div>
      <div className="h-[264px] mt-[4px] flex shrink-0">
        <BottomLeft />
        <Table />
      </div>
      <div className="h-[20px] bg-[#f0f0f0] flex items-center text-[13px] text-[#222] shrink-0">
        <div className="w-[11px] shrink-0" />
        <div className="w-[106px] h-full border-l border-[#ccc] pl-[5px] shrink-0 whitespace-nowrap leading-[20px]">离线模式</div>
        <div className="border-l border-[#ccc] pl-[5px] h-full leading-[20px]">预备</div>
      </div>
      <Taskbar />
      <Overlays />
    </div>
  );
}
